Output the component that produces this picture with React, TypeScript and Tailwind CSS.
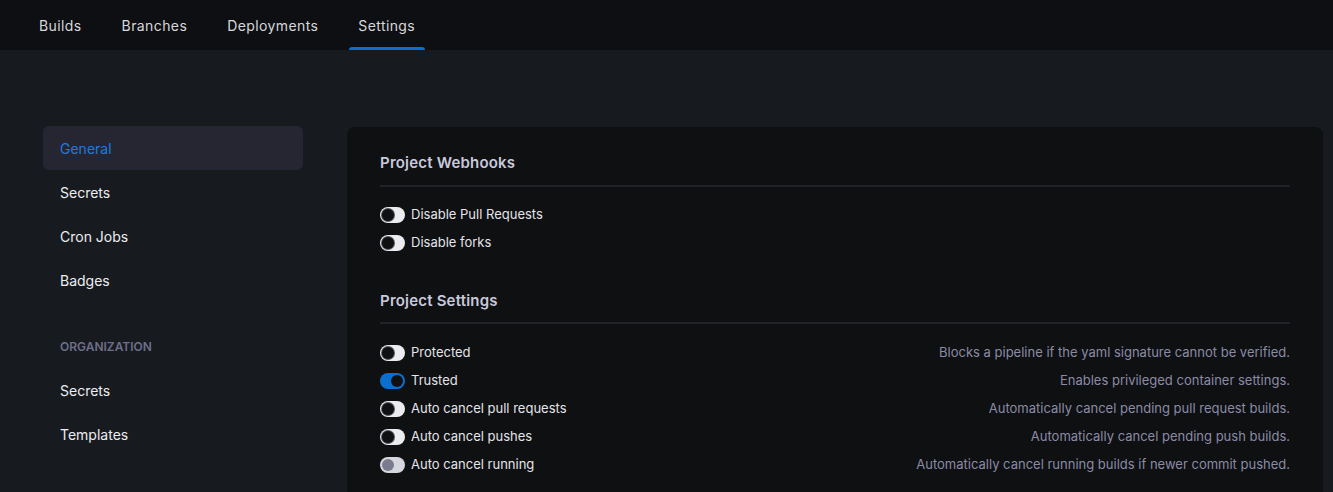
import React from 'react';

const tabs = ['Builds', 'Branches', 'Deployments', 'Settings'];

const Toggle = ({ state }: { state: 'off' | 'on' | 'disabled' }) => {
    if (state === 'on') {
        return (
            <span className="relative inline-flex h-[16px] w-[25px] shrink-0 items-center rounded-full bg-[#0b6fd0]">
                <span className="absolute right-[2px] h-[12px] w-[12px] rounded-full bg-[#0e1012]" />
            </span>
        );
    }
    if (state === 'disabled') {
        return (
            <span className="relative inline-flex h-[16px] w-[25px] shrink-0 items-center rounded-full bg-[#d6d6de]">
                <span className="absolute left-[2px] h-[12px] w-[12px] rounded-full bg-[#7b7b90]" />
            </span>
        );
    }
    return (
        <span className="relative inline-flex h-[16px] w-[25px] shrink-0 items-center rounded-full bg-[#ececf0]">
            <span className="absolute left-[2px] h-[12px] w-[12px] rounded-full bg-[#0e1012] ring-[1px] ring-[#55555f]" />
        </span>
    );
};

const Row = ({ label, state, desc }: { label: string; state: 'off' | 'on' | 'disabled'; desc?: string }) => (
    <div className="flex h-[28px] items-center justify-between">
        <div className="flex items-center gap-[6px]">
            <Toggle state={state} />
            <span className="text-[13px] text-[#e4e4ea]">{label}</span>
        </div>
        {desc && <span className="text-[13px] text-[#8b8ba6]">{desc}</span>}
    </div>
);

const SideItem = ({ label, active }: { label: string; active?: boolean }) => (
    <div
        className={
            'flex h-[44px] items-center rounded-md px-[17px] text-[14px] ' +
            (active ? 'bg-[#262633] text-[#1a7be0]' : 'text-[#ededf0]')
        }
    >
        {label}
    </div>
);

export default function App() {
    return (
        <div className="min-h-screen bg-[#171b20] font-['Inter','Liberation_Sans',sans-serif]">
            <div className="flex h-[50px] items-stretch bg-[#0d0f12] pl-[19px]">
                {tabs.map((t) => (
                    <div key={t} className="relative flex items-center px-[20px] text-[14px] tracking-[0.4px] text-[#d7d7dc]">
                        {t}
                        {t === 'Settings' && (
                            <span className="absolute bottom-0 left-[11px] right-[10px] h-[3px] rounded-t-sm bg-[#0b6fd0]" />
                        )}
                    </div>
                ))}
            </div>

            <div className="flex gap-[44px] pl-[43px] pr-[10px] pt-[76px]">
                <div className="w-[260px] shrink-0">
                    <SideItem label="General" active />
                    <SideItem label="Secrets" />
                    <SideItem label="Cron Jobs" />
                    <SideItem label="Badges" />
                    <div className="mt-[22px] flex h-[44px] items-center px-[17px] pt-[2px] text-[12px] font-semibold text-[#6e6e8a]">
                        ORGANIZATION
                    </div>
                    <SideItem label="Secrets" />
                    <SideItem label="Templates" />
                </div>

                <div className="mt-[1px] flex-1 rounded-t-lg bg-[#0e1012] pb-[20px] pl-[33px] pr-[33px] pt-[25px]">
                    <h2 className="text-[15px] font-semibold tracking-[0.2px] text-[#c9c9dd]">Project Webhooks</h2>
                    <div className="mt-[10px] h-[2px] bg-[#212328]" />
                    <div className="mt-[14px]">
                        <Row label="Disable Pull Requests" state="off" />
                        <Row label="Disable forks" state="off" />
                    </div>

                    <h2 className="mt-[33px] text-[15px] font-semibold tracking-[0.2px] text-[#c9c9dd]">Project Settings</h2>
                    <div className="mt-[10px] h-[2px] bg-[#212328]" />
                    <div className="mt-[15px]">
                        <Row label="Protected" state="off" desc="Blocks a pipeline if the yaml signature cannot be verified." />
                        <Row label="Trusted" state="on" desc="Enables privileged container settings." />
                        <Row label="Auto cancel pull requests" state="off" desc="Automatically cancel pending pull request builds." />
                        <Row label="Auto cancel pushes" state="off" desc="Automatically cancel pending push builds." />
                        <Row label="Auto cancel running" state="disabled" desc="Automatically cancel running builds if newer commit pushed." />
                    </div>
                </div>
            </div>
        </div>
    );
}
